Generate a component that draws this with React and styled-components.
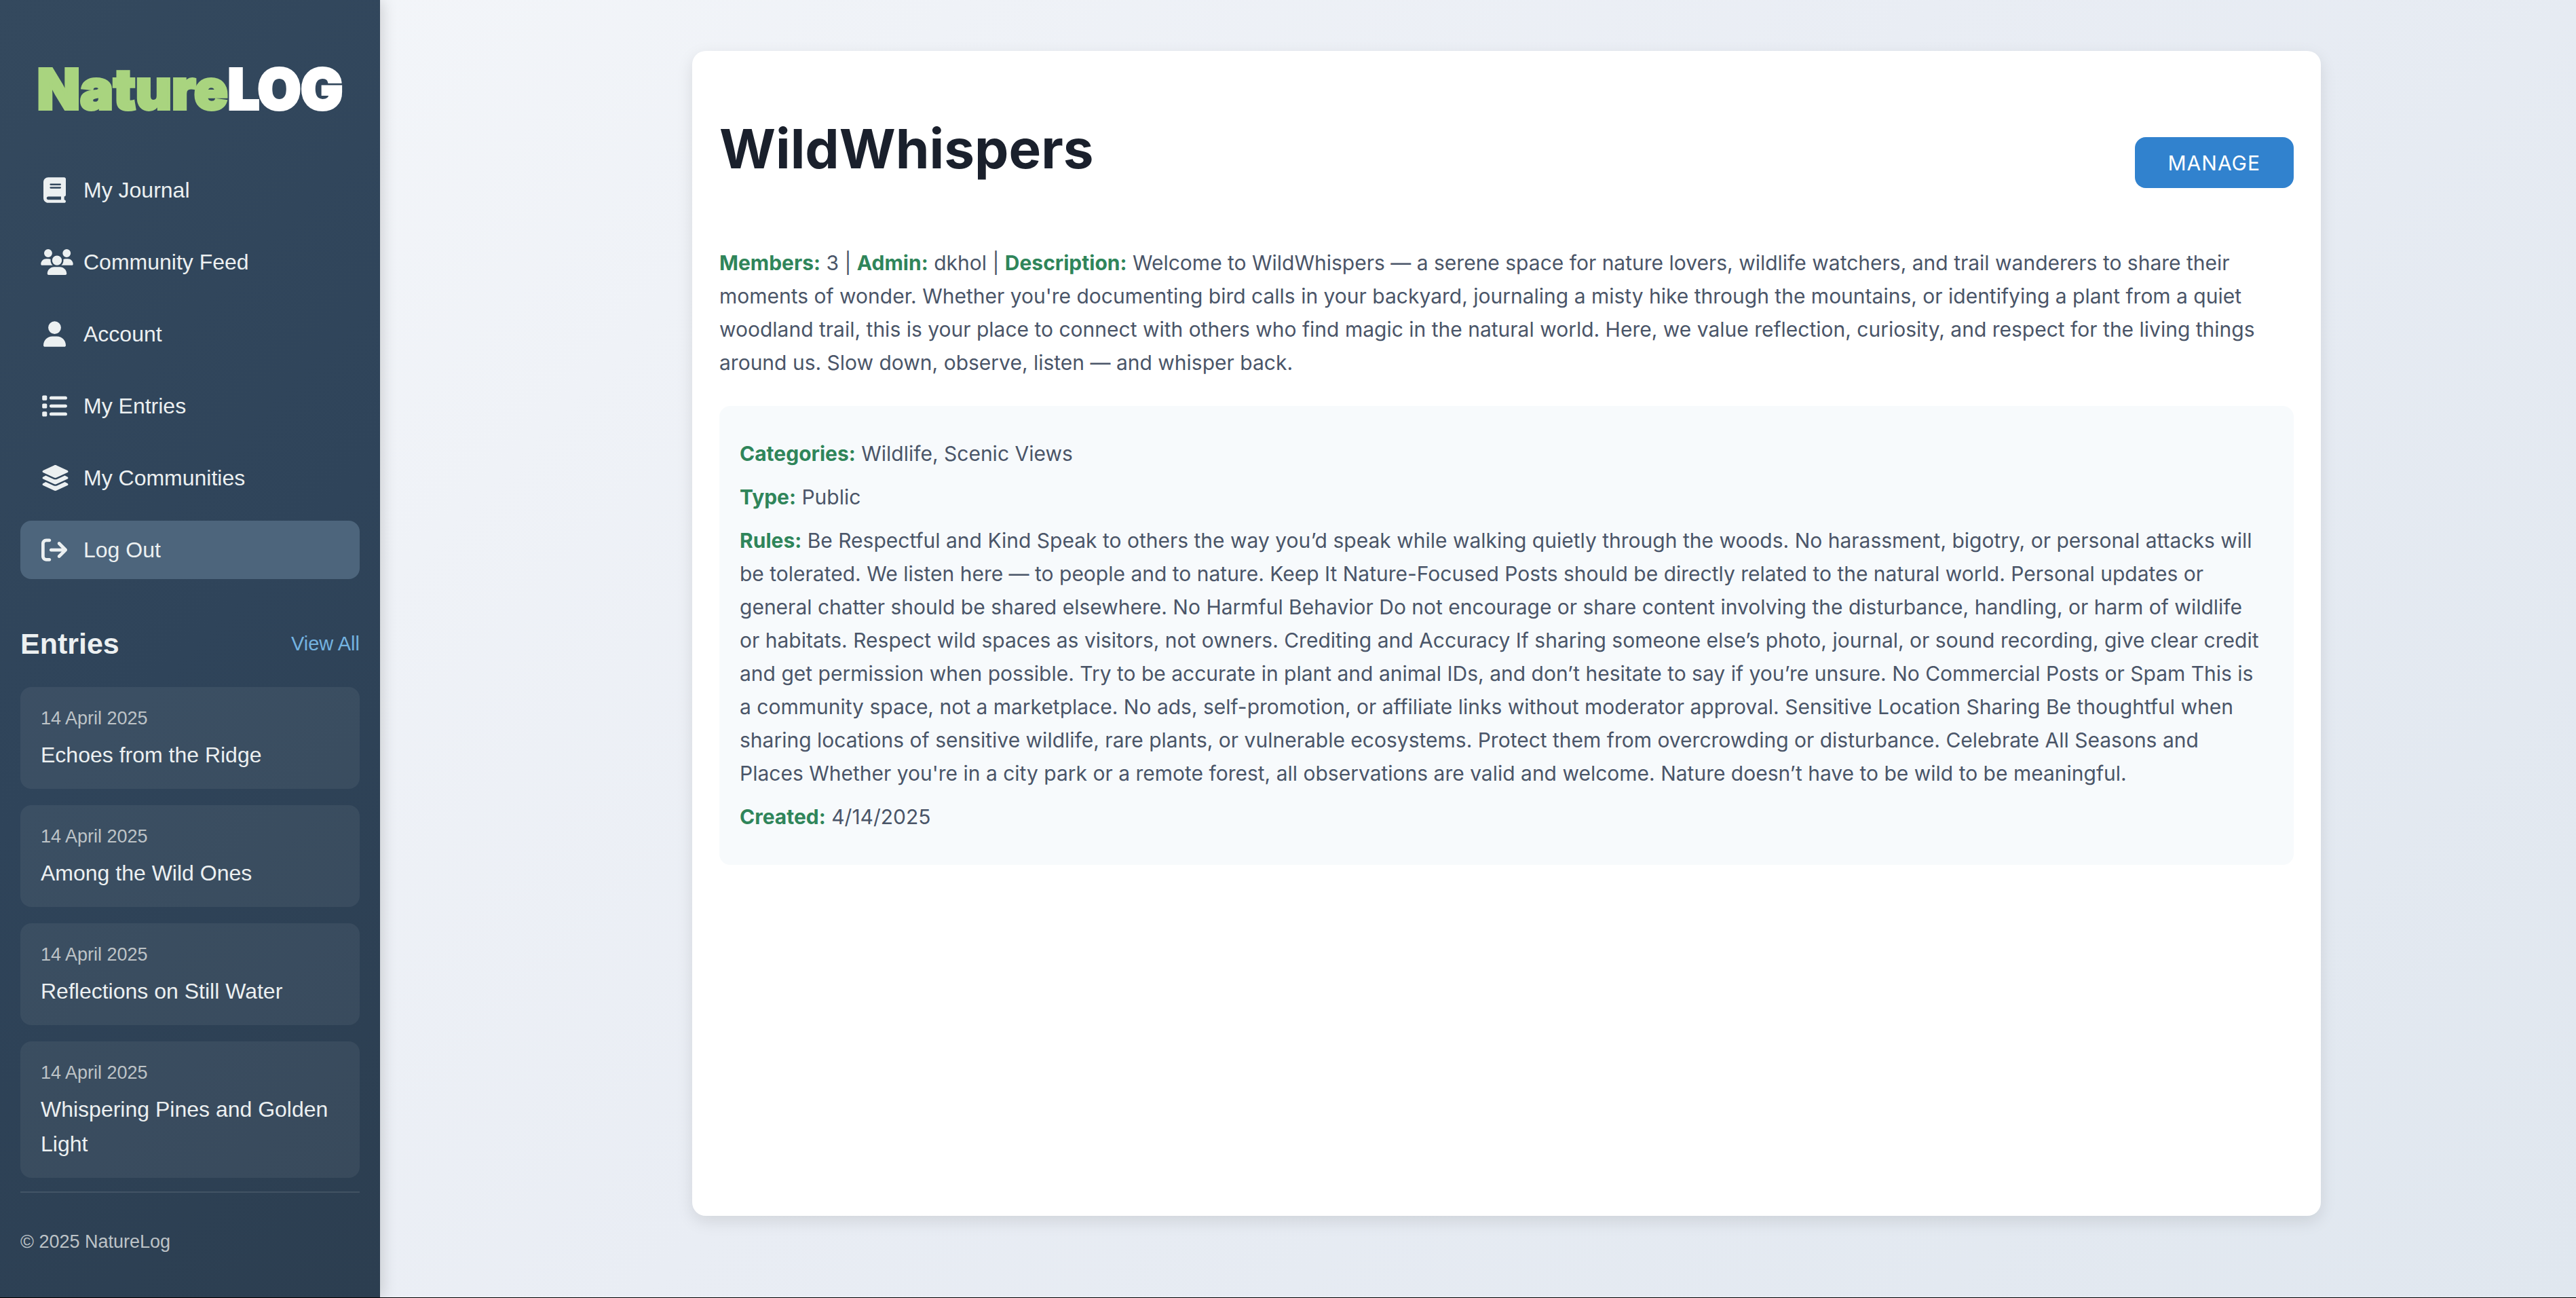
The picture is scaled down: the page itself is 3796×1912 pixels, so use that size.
import React from "react";
import styled, { createGlobalStyle } from "styled-components";
import {
  FaBook,
  FaUsers,
  FaUser,
  FaList,
  FaLayerGroup,
  FaArrowRightFromBracket,
} from "react-icons/fa6";

const GlobalStyle = createGlobalStyle`
  *, *::before, *::after { box-sizing: border-box; }
  body {
    margin: 0;
    background: linear-gradient(135deg, #f5f7fa 0%, #e9edf4 50%, #e0e7ef 100%);
    font-family: "Liberation Sans", Arial, sans-serif;
    font-size: 32px;
  }
`;

const Page = styled.div`
  display: flex;
  min-height: 100vh;
  border-bottom: 1px solid #000000;
`;

const Sidebar = styled.aside`
  display: flex;
  flex-direction: column;
  flex: none;
  width: 560px;
  padding: 86px 30px 56px;
  background: linear-gradient(135deg, #34495e 0%, #2f445a 50%, #2c3e50 100%);
  box-shadow: 4px 0 20px rgba(0, 0, 0, 0.15);
  color: #ecf0f1;
`;

const Logo = styled.a`
  align-self: center;
  font-family: Inter, sans-serif;
  font-weight: 900;
  font-size: 82px;
  line-height: 92px;
  color: #ffffff;
  -webkit-text-stroke: 4px currentColor;
  text-decoration: none;
  white-space: nowrap;
`;

const LogoAccent = styled.span`
  color: #a9d47f;
`;

const Nav = styled.nav`
  display: flex;
  flex-direction: column;
  gap: 20px;
  margin-top: 59px;
`;

const NavLink = styled.a`
  display: flex;
  align-items: center;
  gap: 23px;
  height: 86px;
  padding: 0 30px;
  border-radius: 16px;
  background: ${(p) => (p.$active ? "#4d657c" : "transparent")};
  color: #ecf0f1;
  text-decoration: none;
`;

const NavIcon = styled.span`
  display: flex;
  flex: none;
  justify-content: safe center;
  width: 40px;
  svg {
    flex: none;
    width: ${(p) => p.$width}px;
    height: 38px;
  }
`;

const EntriesHeader = styled.div`
  display: flex;
  align-items: center;
  justify-content: space-between;
  margin-top: 61px;
`;

const EntriesTitle = styled.h2`
  margin: 0;
  font-size: 43px;
  line-height: 68px;
`;

const ViewAll = styled.a`
  font-size: 29px;
  color: #74b3e0;
  text-decoration: none;
`;

const EntryList = styled.ul`
  display: flex;
  flex-direction: column;
  gap: 24px;
  margin: 30px 0 0;
  padding: 0;
  list-style: none;
`;

const Entry = styled.li`
  padding: 24px 30px;
  border-radius: 16px;
  background: rgba(255, 255, 255, 0.06);
`;

const EntryDate = styled.time`
  display: block;
  margin-bottom: 7px;
  font-size: 27px;
  line-height: 44px;
  color: #bdc3c7;
`;

const EntryTitle = styled.a`
  display: block;
  line-height: 51px;
  color: #ecf0f1;
  text-decoration: none;
`;

const Footer = styled.footer`
  margin-top: 20px;
  padding-top: 50px;
  border-top: 2px solid rgba(255, 255, 255, 0.1);
  font-size: 27px;
  line-height: 44px;
  color: #bdc3c7;
`;

const Main = styled.main`
  display: flex;
  flex: 1;
  justify-content: center;
  padding: 75px 0 120px 84px;
  font-family: Inter, sans-serif;
  color: #4a5568;
`;

const Card = styled.article`
  width: 100%;
  max-width: 2400px;
  padding: 90px 40px 40px;
  border-radius: 20px;
  background: #ffffff;
  box-shadow: 0 8px 24px rgba(0, 0, 0, 0.1);
`;

const CardHeader = styled.header`
  display: flex;
  align-items: flex-end;
  justify-content: space-between;
  height: 112px;
  margin-bottom: 86px;
`;

const CardTitle = styled.h1`
  align-self: flex-start;
  margin: 0;
  font-size: 80px;
  line-height: 108px;
  font-weight: 700;
  color: #1a202c;
`;

const ManageButton = styled.button`
  height: 75px;
  padding: 0 49px;
  border: 0;
  border-radius: 16px;
  background: #3182ce;
  color: #ffffff;
  font-family: inherit;
  font-size: 30px;
  letter-spacing: 1px;
  text-transform: uppercase;
`;

const Text = styled.p`
  margin: 0;
  font-size: 30px;
  line-height: 49px;
`;

const Label = styled.strong`
  font-weight: 700;
  color: #2f855a;
`;

const Details = styled.section`
  display: flex;
  flex-direction: column;
  gap: 15px;
  margin-top: 39px;
  padding: 46px 50px 46px 30px;
  border-radius: 16px;
  background: #f7fafc;
`;

const navItems = [
  { label: "My Journal", icon: FaBook, width: 33 },
  { label: "Community Feed", icon: FaUsers, width: 48 },
  { label: "Account", icon: FaUser, width: 33 },
  { label: "My Entries", icon: FaList, width: 38 },
  { label: "My Communities", icon: FaLayerGroup, width: 43 },
  { label: "Log Out", icon: FaArrowRightFromBracket, width: 38, active: true },
];

const entries = [
  "Echoes from the Ridge",
  "Among the Wild Ones",
  "Reflections on Still Water",
  "Whispering Pines and Golden Light",
];

const description =
  "Welcome to WildWhispers — a serene space for nature lovers, wildlife watchers, and trail wanderers to share their moments of wonder. Whether you're documenting bird calls in your backyard, journaling a misty hike through the mountains, or identifying a plant from a quiet woodland trail, this is your place to connect with others who find magic in the natural world. Here, we value reflection, curiosity, and respect for the living things around us. Slow down, observe, listen — and whisper back.";

const rules =
  "Be Respectful and Kind Speak to others the way you’d speak while walking quietly through the woods. No harassment, bigotry, or personal attacks will be tolerated. We listen here — to people and to nature. Keep It Nature-Focused Posts should be directly related to the natural world. Personal updates or general chatter should be shared elsewhere. No Harmful Behavior Do not encourage or share content involving the disturbance, handling, or harm of wildlife or habitats. Respect wild spaces as visitors, not owners. Crediting and Accuracy If sharing someone else’s photo, journal, or sound recording, give clear credit and get permission when possible. Try to be accurate in plant and animal IDs, and don’t hesitate to say if you’re unsure. No Commercial Posts or Spam This is a community space, not a marketplace. No ads, self-promotion, or affiliate links without moderator approval. Sensitive Location Sharing Be thoughtful when sharing locations of sensitive wildlife, rare plants, or vulnerable ecosystems. Protect them from overcrowding or disturbance. Celebrate All Seasons and Places Whether you're in a city park or a remote forest, all observations are valid and welcome. Nature doesn’t have to be wild to be meaningful.";

export default function App() {
  return (
    <>
      <GlobalStyle />
      <Page>
        <Sidebar>
          <Logo href="#">
            <LogoAccent>Nature</LogoAccent>LOG
          </Logo>
          <Nav>
            {navItems.map(({ label, icon: Icon, width, active }) => (
              <NavLink key={label} href="#" $active={active}>
                <NavIcon $width={width}>
                  <Icon />
                </NavIcon>
                {label}
              </NavLink>
            ))}
          </Nav>
          <EntriesHeader>
            <EntriesTitle>Entries</EntriesTitle>
            <ViewAll href="#">View All</ViewAll>
          </EntriesHeader>
          <EntryList>
            {entries.map((title) => (
              <Entry key={title}>
                <EntryDate dateTime="2025-04-14">14 April 2025</EntryDate>
                <EntryTitle href="#">{title}</EntryTitle>
              </Entry>
            ))}
          </EntryList>
          <Footer>© 2025 NatureLog</Footer>
        </Sidebar>
        <Main>
          <Card>
            <CardHeader>
              <CardTitle>WildWhispers</CardTitle>
              <ManageButton type="button">Manage</ManageButton>
            </CardHeader>
            <Text>
              <Label>Members:</Label> 3 | <Label>Admin:</Label> dkhol |{" "}
              <Label>Description:</Label> {description}
            </Text>
            <Details>
              <Text>
                <Label>Categories:</Label> Wildlife, Scenic Views
              </Text>
              <Text>
                <Label>Type:</Label> Public
              </Text>
              <Text>
                <Label>Rules:</Label> {rules}
              </Text>
              <Text>
                <Label>Created:</Label> 4/14/2025
              </Text>
            </Details>
          </Card>
        </Main>
      </Page>
    </>
  );
}
